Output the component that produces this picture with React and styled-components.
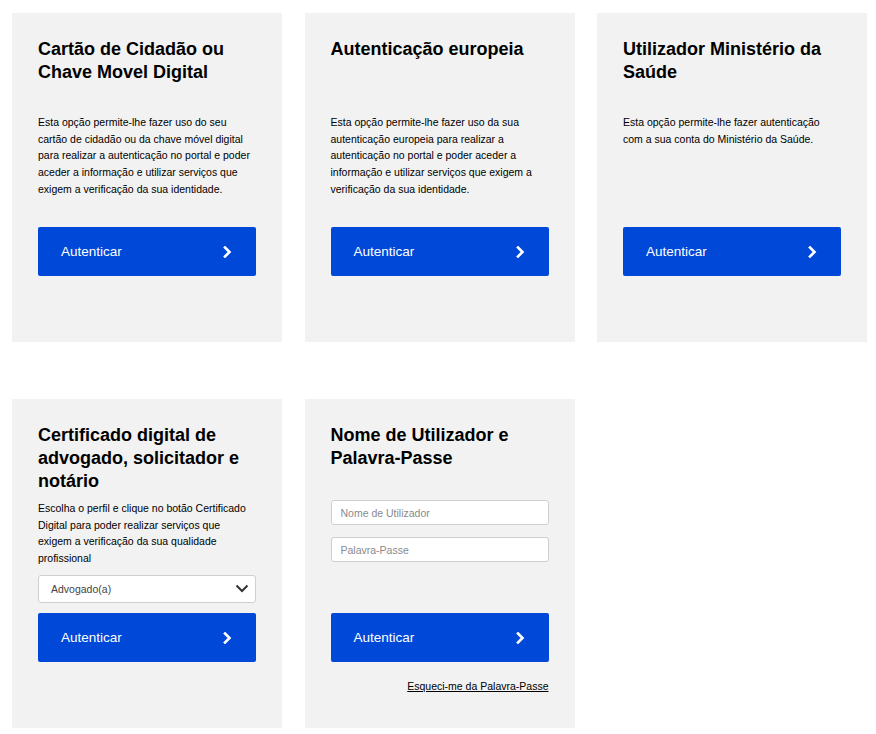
import styled, { createGlobalStyle } from "styled-components"

const GlobalStyle = createGlobalStyle`
    body {
        margin: 0;
        background: #ffffff;
        font-family: "Liberation Sans", Arial, sans-serif;
        color: #000;
    }
`;

const cards = [
    {
        id: 'cc',
        title: 'Cartão de Cidadão ou Chave Movel Digital',
        text: 'Esta opção permite-lhe fazer uso do seu cartão de cidadão ou da chave móvel digital para realizar a autenticação no portal e poder aceder a informação e utilizar serviços que exigem a verificação da sua identidade.',
    },
    {
        id: 'eidas',
        title: 'Autenticação europeia',
        text: 'Esta opção permite-lhe fazer uso da sua autenticação europeia para realizar a autenticação no portal e poder aceder a informação e utilizar serviços que exigem a verificação da sua identidade.',
    },
    {
        id: 'ms',
        title: 'Utilizador Ministério da Saúde',
        text: 'Esta opção permite-lhe fazer autenticação com a sua conta do Ministério da Saúde.',
    },
];

function Chevron() {
    return (
        <svg width="9" height="12" viewBox="0 0 9 12">
            <polyline points="2,1.5 6.5,6 2,10.5" fill="none" stroke="#fff" strokeWidth="2.6" strokeLinecap="square" />
        </svg>
    )
}

function AuthButton() {
    return (
        <Button>
            <span>Autenticar</span>
            <Chevron />
        </Button>
    )
}

function App() {
    return (
        <>
            <GlobalStyle />
            <Grid>
                {cards.map((card) => (
                    <Card key={card.id}>
                        <Title>{card.title}</Title>
                        <Text>{card.text}</Text>
                        <AuthButton />
                        <Footer />
                    </Card>
                ))}

                <Card>
                    <Title>Certificado digital de advogado, solicitador e notário</Title>
                    <Text>Escolha o perfil e clique no botão Certificado Digital para poder realizar serviços que exigem a verificação da sua qualidade profissional</Text>
                    <SelectBox>
                        <span>Advogado(a)</span>
                        <svg width="14" height="9" viewBox="0 0 14 9">
                            <polyline points="1.5,1.5 7,7 12.5,1.5" fill="none" stroke="#333" strokeWidth="2" />
                        </svg>
                    </SelectBox>
                    <AuthButton />
                    <Footer />
                </Card>

                <Card>
                    <Title>Nome de Utilizador e Palavra-Passe</Title>
                    <Fields>
                        <Input placeholder="Nome de Utilizador" />
                        <Input placeholder="Palavra-Passe" type="password" />
                    </Fields>
                    <AuthButton />
                    <Footer>
                        <Link href="#">Esqueci-me da Palavra-Passe</Link>
                    </Footer>
                </Card>
            </Grid>
        </>
    )
}

const Grid = styled.div`
    display: grid;
    grid-template-columns: repeat(3, 270px);
    column-gap: 22.5px;
    row-gap: 57px;
    padding: 13px 0 6px 12px;
`;

const Card = styled.div`
    display: flex;
    flex-direction: column;
    min-height: 329px;
    box-sizing: border-box;
    padding: 25px 26px;
    background: #f2f2f2;
`;

const Title = styled.h2`
    margin: 0 0 7px;
    min-height: 69px;
    font-size: 18px;
    line-height: 23px;
    font-weight: 700;
`;

const Text = styled.p`
    margin: 0;
    font-size: 10.5px;
    line-height: 16.7px;
`;

const SelectBox = styled.div`
    display: flex;
    align-items: center;
    justify-content: space-between;
    height: 28px;
    box-sizing: border-box;
    margin-top: 8px;
    padding: 0 6px 0 12px;
    background: #fff;
    border: 1px solid #cfcfcf;
    border-radius: 3px;
    font-size: 10.5px;
    color: #444;
`;

const Fields = styled.div`
    display: flex;
    flex-direction: column;
    gap: 12px;
`;

const Input = styled.input`
    height: 25px;
    box-sizing: border-box;
    padding: 0 9px;
    background: #fff;
    border: 1px solid #cfcfcf;
    border-radius: 3px;
    font-family: "Liberation Sans", Arial, sans-serif;
    font-size: 10.5px;
    outline: none;
    &::placeholder {
        color: #8a8a8a;
    }
`;

const Button = styled.button`
    display: flex;
    align-items: center;
    justify-content: space-between;
    height: 49px;
    margin-top: auto;
    padding: 0 24px 0 23px;
    background: #0048d8;
    border: none;
    border-radius: 2px;
    color: #fff;
    font-family: "Liberation Sans", Arial, sans-serif;
    font-size: 13.5px;
    cursor: pointer;
`;

const Footer = styled.div`
    display: flex;
    justify-content: flex-end;
    align-items: flex-start;
    height: 41px;
    padding-top: 16px;
    box-sizing: border-box;
`;

const Link = styled.a`
    font-size: 10.5px;
    line-height: 17px;
    color: #000;
    text-decoration: underline;
`;

export default App
